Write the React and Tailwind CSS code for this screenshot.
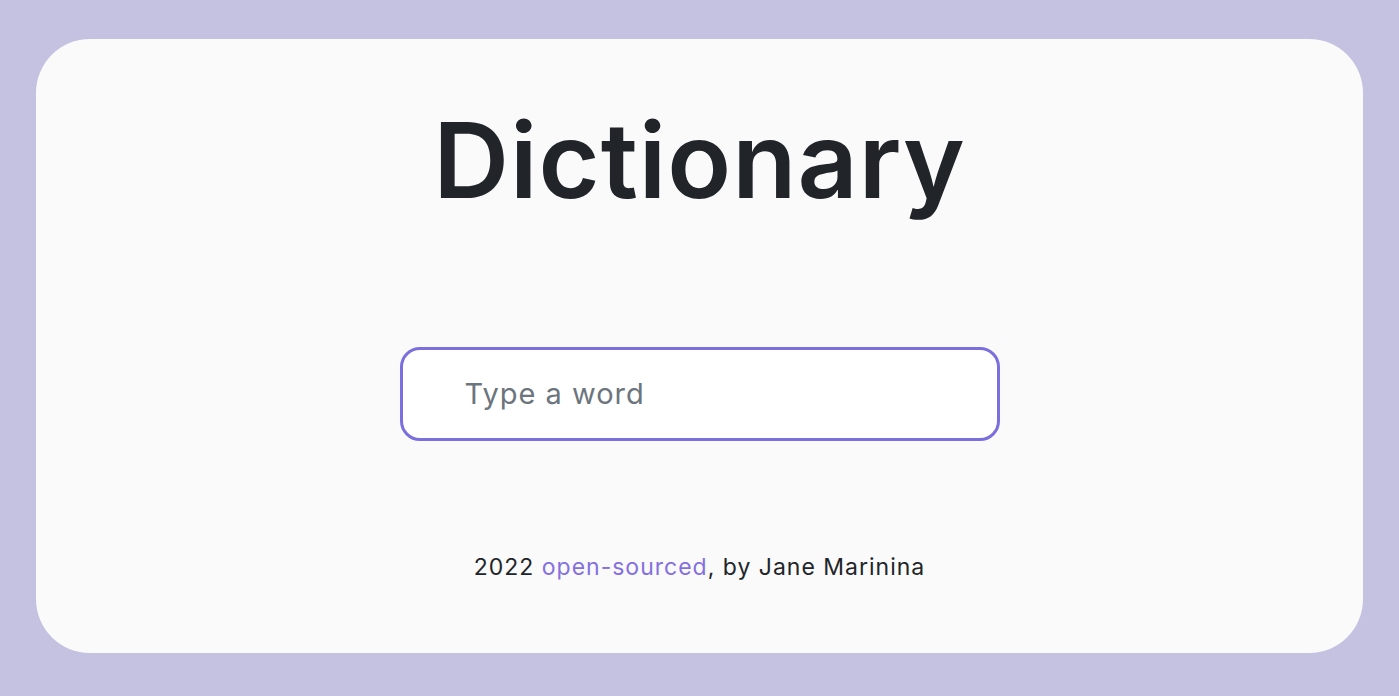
export default function App() {
  return (
    <div className="w-full h-[696px] bg-[#c5c1e0] px-[36px] pt-[39px] pb-[43px]" style={{ fontFamily: 'Inter, "Open Sans", sans-serif' }}>
      <div className="h-full bg-[#fafafa] rounded-[54px] flex flex-col items-center">
        <h1 className="mt-[56px] text-[105px] leading-[130px] font-semibold text-[#212529] tracking-[1px]">Dictionary</h1>
        <div className="mt-[122px] w-[600px] h-[94px] rounded-[20px] border-[3px] border-[#7b6fdd] bg-white flex items-center pl-[62px]">
          <input
            type="search"
            placeholder="Type a word"
            className="w-full outline-none bg-transparent text-[29px] tracking-[1px] text-[#212529] placeholder:text-[#6c757d]"
          />
        </div>
        <footer className="mt-[109px] text-[23px] tracking-[1px] text-[#212529]">
          2022 <a href="#" className="text-[#8470e0]">open-sourced</a>, by Jane Marinina
        </footer>
      </div>
    </div>
  );
}
